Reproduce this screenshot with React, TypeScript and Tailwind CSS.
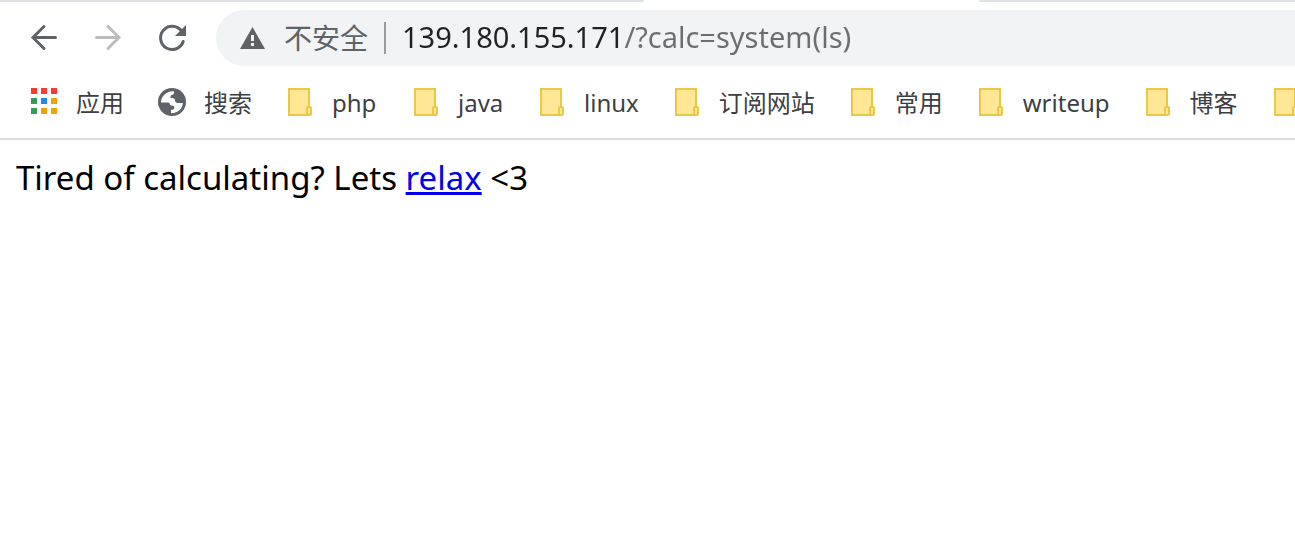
import { useState } from "react";

function BackIcon() {
  return (
    <svg viewBox="0 0 32 32" className="size-8" fill="none" stroke="currentColor" strokeWidth="3" aria-hidden="true">
      <path d="M27.500 15.500H5M16 4.500 5 15.500l11 11" strokeLinecap="round" strokeLinejoin="miter" />
    </svg>
  );
}

function ForwardIcon() {
  return (
    <svg viewBox="0 0 32 32" className="size-8" fill="none" stroke="currentColor" strokeWidth="3" aria-hidden="true">
      <path d="M4.500 15.500H27M16 4.500l11 11-11 11" strokeLinecap="round" strokeLinejoin="miter" />
    </svg>
  );
}

function ReloadIcon() {
  return (
    <svg viewBox="0 0 32 32" className="size-8" fill="none" aria-hidden="true">
      <path d="M27.200 19.500A11.600 11.600 0 1 1 25.500 9" stroke="currentColor" strokeWidth="3" strokeLinecap="round" />
      <path d="M30 3v11H19z" fill="currentColor" />
    </svg>
  );
}

function WarningIcon() {
  return (
    <svg viewBox="0 0 26 24" className="h-6 w-[26px]" aria-hidden="true">
      <path d="M12.500 1 25 23H0z" fill="#5f6163" />
      <path d="M11 9h3v6h-3zM11 17h3v3h-3z" fill="#f1f3f4" />
    </svg>
  );
}

const appDots = ["#f93a32", "#f93a32", "#f93a32", "#2f9e5b", "#1e88f7", "#f2a103", "#2f9e5b", "#f2a103", "#f2a103"];

function AppsIcon() {
  return (
    <svg viewBox="0 0 32 32" className="size-8" shapeRendering="crispEdges" aria-hidden="true">
      {appDots.map((color, i) => (
        <rect key={i} x={3 + (i % 3) * 10} y={1 + Math.floor(i / 3) * 10} width="6" height="6" fill={color} />
      ))}
    </svg>
  );
}

function GlobeIcon() {
  return (
    <svg viewBox="0 0 32 32" className="size-8" aria-hidden="true">
      <circle cx="16" cy="15" r="14" fill="#5f6368" />
      <path
        d="M5 15.500C5 9 10.500 4 18 4.200V6c0 1-.600 1.600-1.500 1.800-1.500.300-2 1-2 2V11h2c1.500 0 2.500 1 2.500 2.200 0 1.800 1.200 2.800 3 2.800h4.800c0 5-4.300 10.200-11.800 10.200v-3.500h1.500c1 0 1.800-.700 1.800-1.700 0-1.800-1-2.500-2.300-2.500H15c-1 0-1.200-3-2.500-3z"
        fill="#fff"
      />
    </svg>
  );
}

function FolderIcon() {
  return (
    <svg viewBox="0 0 32 32" className="size-8" aria-hidden="true">
      <path d="M5 2h20v26H5z" fill="#ffe796" stroke="#ebc747" strokeWidth="2" />
      <rect x="23" y="20" width="4" height="8" rx="1" fill="#ffe796" stroke="#ebc747" strokeWidth="2" />
    </svg>
  );
}

const bookmarks = [
  { label: "应用", Icon: AppsIcon },
  { label: "搜索", Icon: GlobeIcon },
  { label: "php", Icon: FolderIcon },
  { label: "java", Icon: FolderIcon },
  { label: "linux", Icon: FolderIcon },
  { label: "订阅网站", Icon: FolderIcon },
  { label: "常用", Icon: FolderIcon },
  { label: "writeup", Icon: FolderIcon },
  { label: "博客", Icon: FolderIcon },
  { label: "", Icon: FolderIcon },
];

export default function App() {
  const [address, setAddress] = useState("139.180.155.171/?calc=system(ls)");

  return (
    <div className="min-h-screen overflow-hidden bg-white font-['Noto_Sans','Noto_Sans_CJK_SC',sans-serif]">
      <header className="border-b-2 border-[#dadce0]">
        <div className="flex h-0.5 justify-between" aria-hidden="true">
          <div className="w-1/2 max-w-[644px] rounded-br-full bg-[#dee1e6]" />
          <div className="w-1/4 max-w-[316px] rounded-bl-full bg-[#dee1e6]" />
        </div>

        <div className="flex items-center pt-2 pl-7">
          <nav aria-label="History" className="flex gap-8 pr-7 text-[#5f6368]">
            <button type="button" aria-label="Back"><BackIcon /></button>
            <button type="button" aria-label="Forward" disabled className="text-[#babcbe]"><ForwardIcon /></button>
            <button type="button" aria-label="Reload"><ReloadIcon /></button>
          </nav>
          <div className="flex h-14 flex-1 items-center rounded-l-full bg-[#f1f3f4] pl-6">
            <button type="button" className="flex items-center gap-[18px] text-[28px] leading-8 whitespace-nowrap text-[#5f6368]">
              <WarningIcon />
              不安全
            </button>
            <span className="mx-4 h-8 w-0.5 bg-[#9a9da0]" aria-hidden="true" />
            <input
              type="text"
              aria-label="Address"
              spellCheck={false}
              value={address}
              onChange={(e) => setAddress(e.target.value)}
              className="h-10 min-w-0 flex-1 bg-linear-to-r from-[#202124] from-[222px] to-[#6b6e70] to-[222px] bg-clip-text pb-0.5 text-[29px] text-transparent caret-black outline-none"
            />
          </div>
        </div>

        <nav aria-label="Bookmarks" className="flex h-18 gap-8 overflow-hidden pt-0.5 pl-7">
          {bookmarks.map(({ label, Icon }, i) => (
            <button
              key={i}
              type="button"
              aria-label={label || "More bookmarks"}
              className="flex shrink-0 items-center gap-4 text-2xl whitespace-nowrap text-[#3c4043]"
            >
              <Icon />
              {label && <span className="min-w-[46px] text-left">{label}</span>}
            </button>
          ))}
        </nav>
      </header>

      <main className="p-4 text-[33px] leading-[44px] text-black">
        <p>
          Tired of calculating? Lets{" "}
          <a href="#relax" className="text-[#0000ee] underline">relax</a> &lt;3
        </p>
      </main>
    </div>
  );
}
